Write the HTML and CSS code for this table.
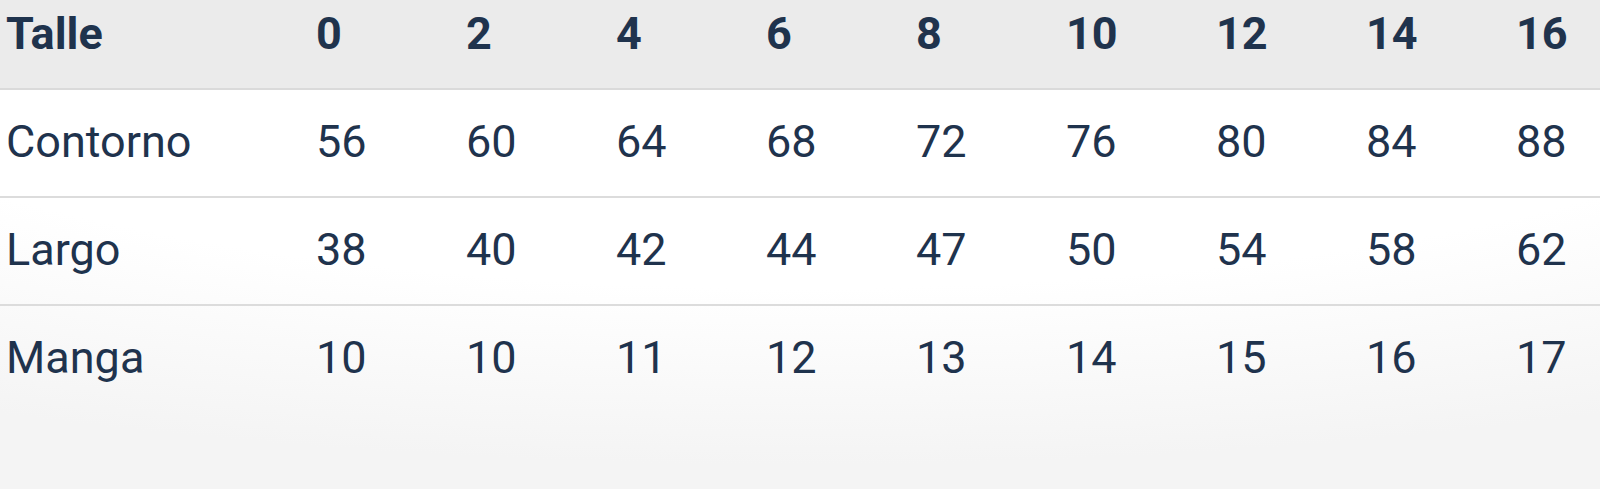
FILE: index.html
```html
<!DOCTYPE html>
<html lang="es">
<head>
<meta charset="utf-8">
<title>Tabla de talles</title>
<link rel="stylesheet" href="styles.css">
</head>
<body>
<table class="sizes">
  <colgroup>
    <col class="col-label">
    <col class="col-num"><col class="col-num"><col class="col-num">
    <col class="col-num"><col class="col-num"><col class="col-num">
    <col class="col-num"><col class="col-num"><col class="col-num">
  </colgroup>
  <thead>
    <tr class="head-row">
      <th>Talle</th><th>0</th><th>2</th><th>4</th><th>6</th><th>8</th><th>10</th><th>12</th><th>14</th><th>16</th>
    </tr>
  </thead>
  <tbody>
    <tr class="body-row">
      <td>Contorno</td><td>56</td><td>60</td><td>64</td><td>68</td><td>72</td><td>76</td><td>80</td><td>84</td><td>88</td>
    </tr>
    <tr class="body-row">
      <td>Largo</td><td>38</td><td>40</td><td>42</td><td>44</td><td>47</td><td>50</td><td>54</td><td>58</td><td>62</td>
    </tr>
    <tr class="body-row last">
      <td>Manga</td><td>10</td><td>10</td><td>11</td><td>12</td><td>13</td><td>14</td><td>15</td><td>16</td><td>17</td>
    </tr>
  </tbody>
</table>
</body>
</html>
```

FILE: styles.css
```css
html, body {
  margin: 0;
  padding: 0;
  height: 100%;
  overflow: hidden;
}

body {
  font-family: Roboto, "Noto Sans", sans-serif;
  color: #1f334d;
  background: radial-gradient(ellipse 110% 95% at 50% 0%, #ffffff 62%, #f4f4f4 100%);
}

.sizes {
  border-collapse: collapse;
  table-layout: fixed;
  width: 1660px;
  font-size: 45px;
  line-height: 54px;
}

.col-label { width: 310px; }
.col-num { width: 150px; }

.sizes th,
.sizes td {
  text-align: left;
  padding: 25px 0 27px 6px;
  white-space: nowrap;
}

.head-row {
  background: #ebebeb;
  border-bottom: 2px solid #dadada;
}

.head-row th {
  font-weight: 700;
  padding-top: 7px;
}

.body-row {
  border-bottom: 2px solid #dcdcdc;
}

.body-row.last {
  border-bottom: none;
}

.body-row td {
  font-weight: 400;
}
```
